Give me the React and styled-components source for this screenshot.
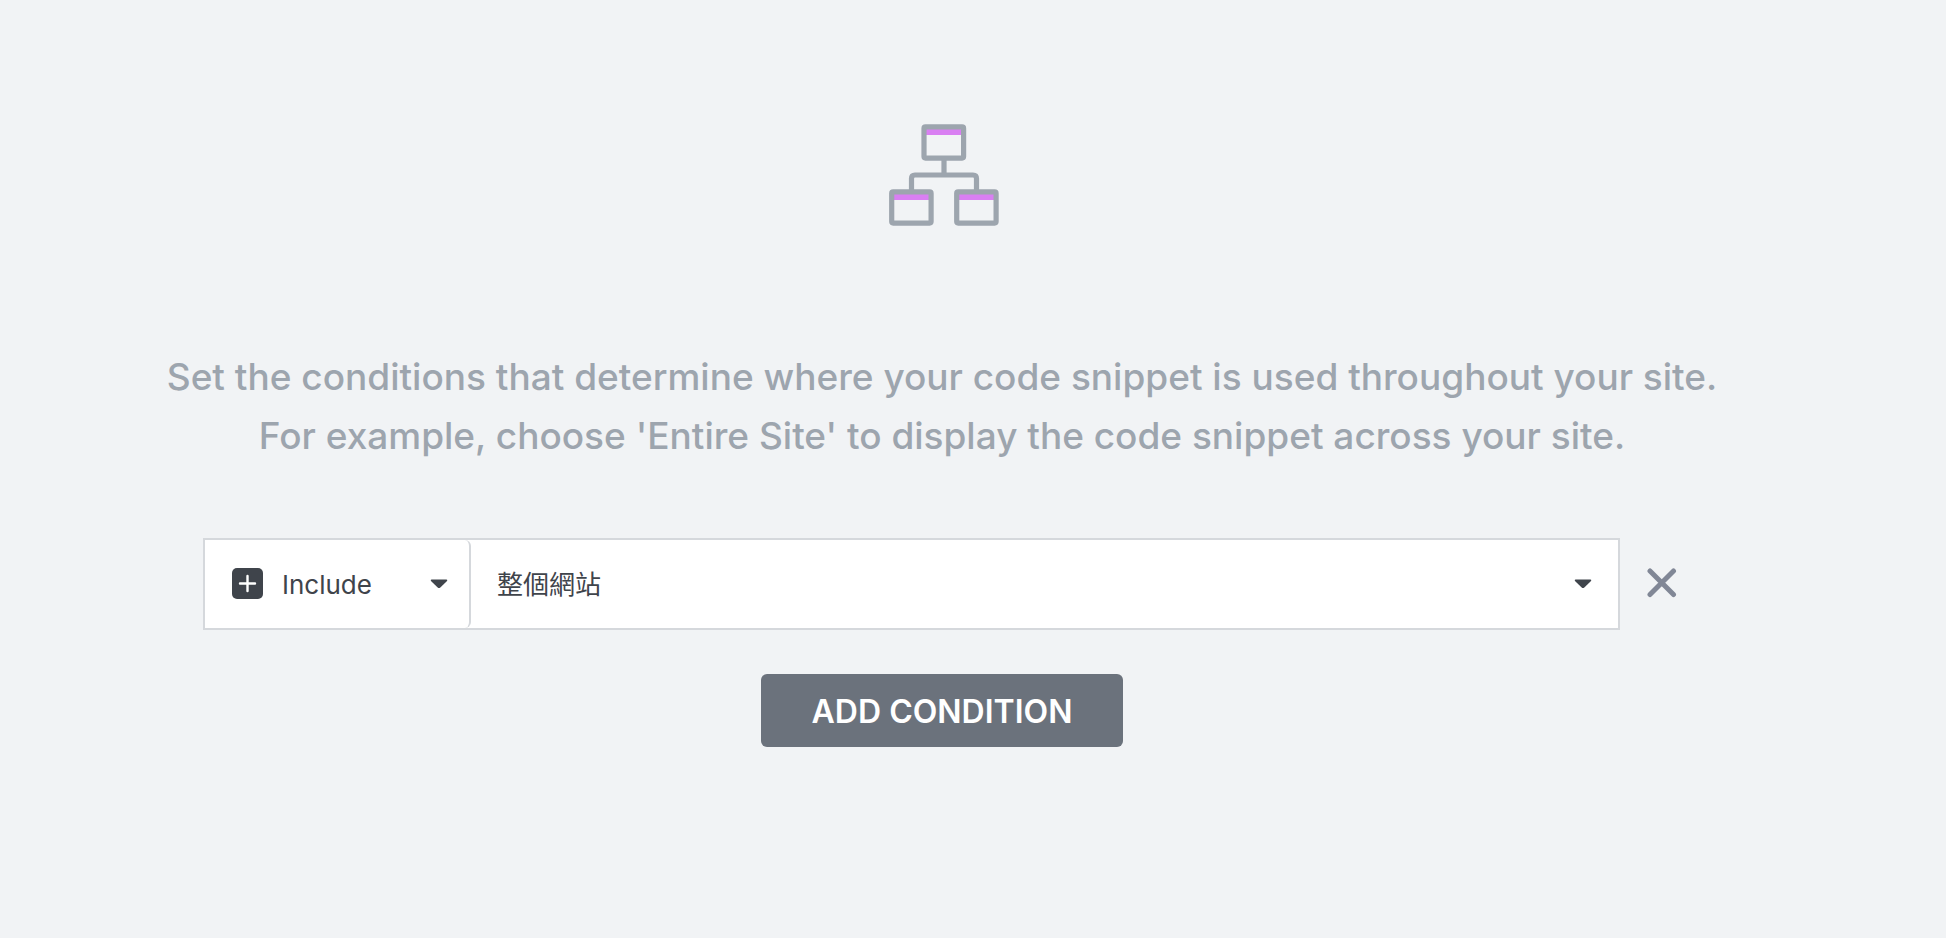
import React, { useState } from 'react'
import styled, { createGlobalStyle } from 'styled-components'

const GlobalStyle = createGlobalStyle`
  * {
    box-sizing: border-box;
  }

  body {
    margin: 0;
    background: #f1f3f5;
    font-family: Inter, 'Noto Sans CJK TC', sans-serif;
  }
`

const Wrapper = styled.main`
  display: flex;
  flex-direction: column;
  align-items: center;
  min-height: 100vh;
  padding: 124px 62px 60px 0;
`

const TreeIcon = styled.svg`
  width: 110px;
  height: 102px;
  margin-left: 4px;
`

const Description = styled.p`
  margin: 121px 0 0;
  color: #9da5ae;
  font-size: 37px;
  font-weight: 500;
  line-height: 59px;
  text-align: center;
`

const Conditions = styled.form`
  display: flex;
  flex-direction: column;
  align-items: center;
  width: 100%;
  margin-top: 73px;
  padding: 0 203px;
`

const Row = styled.div`
  display: flex;
  align-items: center;
  gap: 23px;
  width: 100%;
`

const Fields = styled.div`
  display: flex;
  flex: 1;
  height: 92px;
  border: 2px solid #d5d8dc;
  background: white;
`

const Field = styled.div`
  position: relative;
  flex: ${props => props.$width ? `0 0 ${props.$width}` : '1'};
`

const Select = styled.select`
  appearance: none;
  width: 100%;
  height: 100%;
  padding: 0 60px 0 ${props => props.$icon ? '77px' : '26px'};
  border: 0;
  border-right: ${props => props.$icon ? '2px solid #d5d8dc' : '0'};
  border-radius: ${props => props.$icon ? '0 6px 6px 0' : '0'};
  background: transparent;
  color: #3f444b;
  font-family: inherit;
  font-size: 26px;
  cursor: pointer;
`

const Badge = styled.svg`
  position: absolute;
  top: 28px;
  left: 27px;
  width: 31px;
  height: 31px;
  pointer-events: none;
`

const Caret = styled.svg`
  position: absolute;
  top: 39px;
  right: ${props => props.$right};
  width: 18px;
  height: 10px;
  fill: #3f444b;
  pointer-events: none;
`

const RemoveButton = styled.button`
  display: flex;
  padding: 3px 4px 5px;
  border: 0;
  background: none;
  color: #818796;
  cursor: pointer;
`

const AddButton = styled.button`
  height: 73px;
  margin-top: 44px;
  padding: 2px 51px 0;
  border: 0;
  border-radius: 6px;
  background: #6b727c;
  color: white;
  font-family: inherit;
  font-size: 32px;
  font-weight: 600;
  text-transform: uppercase;
  cursor: pointer;
`

const Arrow = ({ right }) => (
  <Caret $right={right} viewBox="0 0 18 10" aria-hidden="true">
    <path d="M1.5 0.5h15q1.4 0.4 0.5 1.6L10.3 8.5q-1.3 1-2.6 0L1 2.1Q0.1 0.9 1.5 0.5Z" />
  </Caret>
)

const Tree = () => (
  <TreeIcon viewBox="0 0 110 102" fill="none" aria-hidden="true">
    <path d="M35 8h40M3 73h40M68 73h40" stroke="#d97ff2" strokeWidth="6" />
    <g stroke="#9da5ae" strokeWidth="5.2">
      <rect x="35" y="2.9" width="39.6" height="31.2" rx="1.5" />
      <rect x="2.7" y="67.9" width="39.4" height="31.2" rx="1.5" />
      <rect x="67.7" y="67.9" width="39.4" height="31.2" rx="1.5" />
      <path d="M55 34v17M22.5 67V54.5q0-3.5 3.5-3.5h58q3.5 0 3.5 3.5V67" />
    </g>
  </TreeIcon>
)

const Condition = (props) => {
  const { onRemove } = props

  return (
    <Row>
      <Fields>
        <Field $width="266px">
          <Badge viewBox="0 0 31 31" aria-hidden="true">
            <rect width="31" height="31" rx="5" fill="#3f444b" />
            <path d="M15.5 8v15M8 15.5h15" stroke="white" strokeWidth="2.4" strokeLinecap="round" />
          </Badge>
          <Select $icon aria-label="Condition type" defaultValue="include">
            <option value="include">Include</option>
            <option value="exclude">Exclude</option>
          </Select>
          <Arrow right="23px" />
        </Field>
        <Field>
          <Select aria-label="Condition location" defaultValue="general">
            <option value="general">整個網站</option>
          </Select>
          <Arrow right="26px" />
        </Field>
      </Fields>
      <RemoveButton type="button" aria-label="Remove condition" onClick={onRemove}>
        <svg width="30" height="30" viewBox="0 0 30 30" aria-hidden="true">
          <path d="M3 3l23.5 23.5M26.5 3l-23.5 23.5" stroke="currentColor" strokeWidth="5" strokeLinecap="round" />
        </svg>
      </RemoveButton>
    </Row>
  )
}

export default () => {
  const [rows, setRows] = useState([0])

  const add = () => setRows([...rows, Date.now()])
  const remove = id => setRows(rows.filter(row => row !== id))

  return (
    <Wrapper>
      <GlobalStyle />
      <Tree />
      <Description>
        Set the conditions that determine where your code snippet is used throughout your site.
        <br />
        For example, choose 'Entire Site' to display the code snippet across your site.
      </Description>
      <Conditions>
        {rows.map(id => <Condition key={id} onRemove={() => remove(id)} />)}
        <AddButton type="button" onClick={add}>Add Condition</AddButton>
      </Conditions>
    </Wrapper>
  )
}
